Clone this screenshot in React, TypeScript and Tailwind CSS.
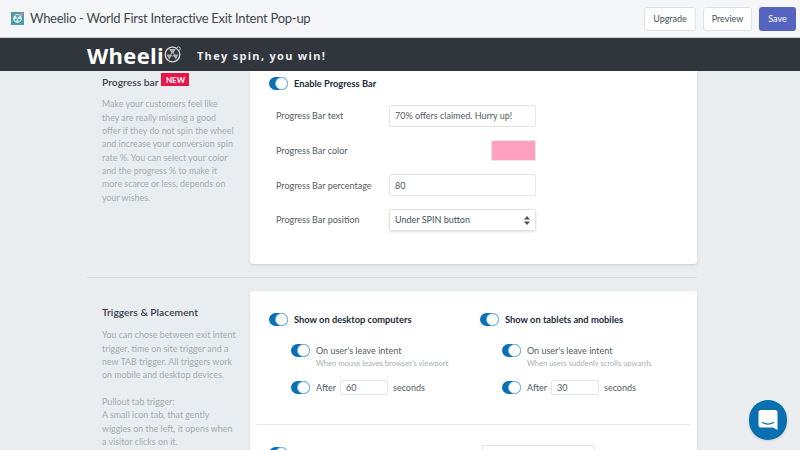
const font = { fontFamily: 'Lato, "Open Sans", sans-serif' };

function Toggle() {
  return (
    <span className="relative inline-block h-[13px] w-[19px] shrink-0 rounded-full bg-[#0a6fb5]">
      <span className="absolute right-0 top-0 h-[13px] w-[13px] rounded-full border border-[#7fbbe4] bg-white" />
    </span>
  );
}

function Field({ label, children }: { label: string; children: React.ReactNode }) {
  return (
    <div className="flex h-[22px] items-center">
      <span className="w-[113px] shrink-0 text-[9px] text-[#555c63]">{label}</span>
      {children}
    </div>
  );
}

function TextBox({ value }: { value: string }) {
  return (
    <div className="flex h-[22px] w-[147px] items-center rounded-[2px] border border-[#e3e6ea] bg-white px-[5px] text-[9px] text-[#555c63]">
      {value}
    </div>
  );
}

function TriggerColumn({ title, hint, seconds, className }: { title: string; hint: string; seconds: string; className: string }) {
  return (
    <div className={className}>
      <div className="flex items-center gap-[6px]">
        <Toggle />
        <span className="text-[9.3px] font-bold text-[#212b36]">{title}</span>
      </div>
      <div className="mt-[17px] ml-[22px] flex items-center gap-[6px]">
        <Toggle />
        <span className="text-[9px] text-[#555c63]">On user's leave intent</span>
      </div>
      <div className="ml-[47px] mt-[1px] text-[7.6px] leading-[11px] text-[#a9aeb3]">{hint}</div>
      <div className="mt-[11px] ml-[22px] flex items-center">
        <Toggle />
        <span className="ml-[6px] w-[24px] text-[9px] text-[#555c63]">After</span>
        <div className="flex h-[15px] w-[48px] items-center rounded-[2px] border border-[#e3e6ea] px-[5px] text-[9px] text-[#555c63]">
          {seconds}
        </div>
        <span className="ml-[5px] text-[9px] text-[#555c63]">seconds</span>
      </div>
    </div>
  );
}

function WheelIcon({ size, stroke }: { size: number; stroke: string }) {
  return (
    <svg width={size} height={size} viewBox="0 0 20 20" fill="none">
      <circle cx="10" cy="10" r="8.6" stroke={stroke} strokeWidth="1.6" />
      <path d="M10 10 6 3.500h8ZM10 10l7 0-3 6ZM10 10l-4 6-3-6Z" fill={stroke} opacity="0.75" />
      <circle cx="10" cy="10" r="1.8" fill="#31363d" stroke={stroke} strokeWidth="0.8" />
      <circle cx="17.200" cy="3" r="2" fill="#31363d" stroke={stroke} strokeWidth="1" />
    </svg>
  );
}

export default function App() {
  return (
    <div className="relative flex h-[450px] w-[800px] flex-col overflow-hidden bg-[#e9edf0]" style={font}>
      <header className="flex h-[38px] shrink-0 items-center border-b border-[#c4cdd5] bg-[#f4f6f8] pl-[11px] pr-[4px]">
        <svg width="13" height="13" viewBox="0 0 13 13">
          <rect width="13" height="13" fill="#4a9ca6" />
          <circle cx="6.500" cy="6.500" r="4.400" fill="#d8edf0" />
          <path d="M6.500 6.500 4 3h5ZM6.500 6.500l3.500 1-2 2.600ZM6.500 6.500l-1.600 3.500-1.600-3Z" fill="#5fa8b2" />
          <circle cx="10.500" cy="2.500" r="1.600" fill="#e58aa8" />
        </svg>
        <h1 className="ml-[6px] text-[13px] font-normal tracking-[-0.27px] text-[#3f4750]">Wheelio - World First Interactive Exit Intent Pop-up</h1>
        <div className="ml-auto flex gap-[7px]">
          <button className="h-[24px] w-[52px] rounded-[3px] border border-[#dfe3e8] bg-white text-[9px] text-[#454f5b]">Upgrade</button>
          <button className="h-[24px] w-[49px] rounded-[3px] border border-[#dfe3e8] bg-white text-[9px] text-[#454f5b]">Preview</button>
          <button className="h-[24px] w-[37px] rounded-[3px] bg-[#5563c1] text-[9px] text-white">Save</button>
        </div>
      </header>

      <div className="flex h-[33px] shrink-0 items-center bg-[#31363d] pl-[87px]">
        <span className="text-[22px] font-bold leading-none tracking-[0.3px] text-white" style={{ fontFamily: '"Open Sans", sans-serif' }}>Wheeli</span>
        <WheelIcon size={17} stroke="#d9dbdc" />
        <span className="ml-[16px] mt-[3px] text-[11px] font-bold tracking-[1.3px] text-[#eceded]" style={{ fontFamily: '"Open Sans", sans-serif' }}>They spin, you win!</span>
      </div>

      <div className="flex flex-col px-[87px]">
        <section className="flex w-[610px] border-b border-[#d9dde1] pb-[13px]">
          <div className="w-[163px] shrink-0 pl-[15px]">
            <div className="flex items-start">
              <h2 className="mt-[4px] text-[10.3px] font-semibold text-[#3a424b]">Progress bar</h2>
              <span className="ml-[3px] mt-[2px] flex h-[13px] w-[28px] items-center justify-center bg-[#ea1547] text-[8px] font-bold text-white">NEW</span>
            </div>
            <p className="mt-[7px] whitespace-nowrap text-[8.9px] leading-[13.3px] text-[#a6abb0]">
              Make your customers feel like<br />
              they are really missing a good<br />
              offer if they do not spin the wheel<br />
              and increase your conversion spin<br />
              rate %. You can select your color<br />
              and the progress % to make it<br />
              more scarce or less, depends on<br />
              your wishes.
            </p>
          </div>
          <div className="h-[193px] w-[447px] rounded-b-[3px] bg-white pl-[19px] pt-[6px] shadow-sm">
            <div className="flex items-center gap-[6px]">
              <Toggle />
              <span className="text-[9.3px] font-bold text-[#212b36]">Enable Progress Bar</span>
            </div>
            <div className="ml-[7px] mt-[14px] flex flex-col gap-[12.7px]">
              <Field label="Progress Bar text">
                <TextBox value="70% offers claimed. Hurry up!" />
              </Field>
              <Field label="Progress Bar color">
                <div className="ml-[102px] h-[21px] w-[45px] rounded-[2px] border border-[#e3e6ea] bg-[#ffa0c0]" />
              </Field>
              <Field label="Progress Bar percentage">
                <TextBox value="80" />
              </Field>
              <Field label="Progress Bar position">
                <div className="flex h-[22px] w-[147px] items-center justify-between rounded-[2px] border border-[#dfe3e8] px-[5px] text-[9px] text-[#454f5b] shadow-sm">
                  Under SPIN button
                  <svg width="6" height="9" viewBox="0 0 6 9" fill="#454f5b">
                    <path d="M3 0 6 3.600H0ZM3 9 0 5.400h6Z" />
                  </svg>
                </div>
              </Field>
            </div>
          </div>
        </section>

        <section className="mt-[13px] flex w-[610px]">
          <div className="w-[163px] shrink-0 pl-[15px]">
            <h2 className="mt-[14px] text-[10.3px] font-semibold text-[#3a424b]">Triggers &amp; Placement</h2>
            <p className="mt-[8px] whitespace-nowrap text-[8.9px] leading-[13.3px] text-[#a6abb0]">
              You can chose between exit intent<br />
              trigger, time on site trigger and a<br />
              new TAB trigger. All triggers work<br />
              on mobile and desktop devices.
            </p>
            <p className="mt-[13.3px] whitespace-nowrap text-[8.9px] leading-[13.3px] text-[#a6abb0]">
              Pullout tab trigger:<br />
              A small icon tab, that gently<br />
              wiggles on the left, it opens when<br />
              a visitor clicks on it.
            </p>
          </div>
          <div className="h-[200px] w-[447px] rounded-t-[3px] bg-white shadow-sm">
            <div className="mx-[7px] flex h-[134px] border-b border-[#e6e8ea] pt-[22px]">
              <TriggerColumn className="ml-[12px] w-[211px]" title="Show on desktop computers" hint="When mouse leaves browser's viewport" seconds="60" />
              <TriggerColumn className="" title="Show on tablets and mobiles" hint="When users suddenly scrolls upwards" seconds="30" />
            </div>
            <div className="flex items-start pl-[19px] pt-[22px]">
              <Toggle />
              <div className="ml-[194px] mt-[-2px] h-[20px] w-[113px] rounded-[2px] border border-[#dfe3e8]" />
            </div>
          </div>
        </section>
      </div>

      <div className="absolute left-[749px] top-[400px] flex h-[40px] w-[38px] items-center justify-center rounded-full bg-[#0a6fb0] shadow">
        <svg width="22" height="24" viewBox="0 0 22 24" fill="none">
          <path d="M4 2h14a2.500 2.500 0 0 1 2.500 2.500V22l-4.500-2.500H4A2.500 2.500 0 0 1 1.500 17V4.500A2.500 2.500 0 0 1 4 2Z" fill="#fff" />
          <path d="M5.500 14.500c3.500 2 7.500 2 11 0" stroke="#0a6fb0" strokeWidth="1.200" strokeLinecap="round" />
        </svg>
      </div>
    </div>
  );
}
